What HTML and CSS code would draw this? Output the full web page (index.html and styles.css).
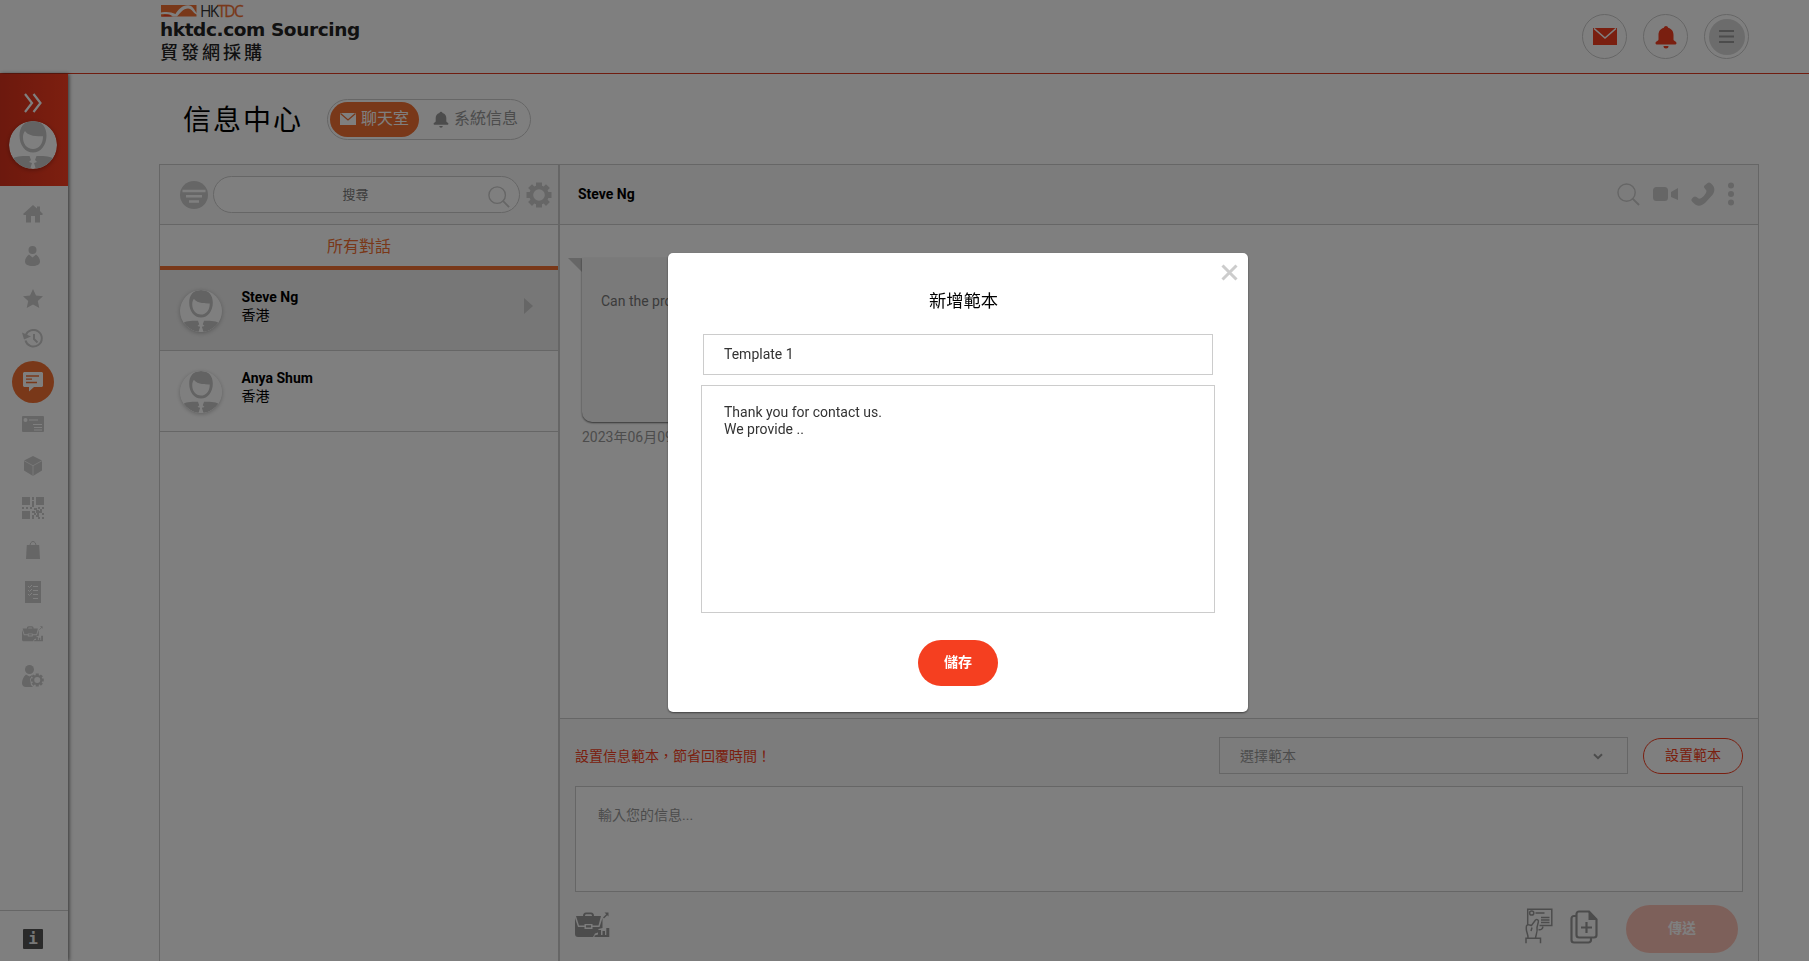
FILE: index.html
```html
<!DOCTYPE html>
<html lang="zh-Hant">
<head>
<meta charset="utf-8">
<title>信息中心</title>
<link rel="stylesheet" href="styles.css">
</head>
<body>
<svg class="defs" width="0" height="0">
  <defs>
    <clipPath id="avatar-clip"><circle cx="24" cy="24" r="24"/></clipPath>
    <symbol id="avatar" viewBox="0 0 48 48">
      <g clip-path="url(#avatar-clip)">
        <rect width="48" height="48" fill="#fff"/>
        <path fill="#c6c6c6" fill-rule="evenodd" d="M24 0C15 0 10.500 6 10.500 14.500c0 9.500 5.500 17 13.500 17s13.500-7.500 13.500-17C37.500 6 33 0 24 0zM16 10c2.500 4 8 5.500 18 5.300C34 23 30 28 24 28S13.800 23 14 16c0-2.500.8-4.500 2-6z"/>
        <path fill="#c6c6c6" d="M3 38c3-2.500 8-3 17.500-3l1.500 4-2 2 3 1-2.500 8H8zM45 38c-3-2.500-8-3-17.500-3L26 39l2 2-3 1 2.500 8H40z"/>
      </g>
    </symbol>
    <symbol id="search" viewBox="0 0 24 24">
      <circle cx="10" cy="10" r="9" fill="none" stroke="#ccc" stroke-width="1.500"/>
      <path d="M16 16l7 7" stroke="#ccc" stroke-width="2"/>
    </symbol>
    <symbol id="bell" viewBox="0 0 22 24">
      <path d="M11 1a2.300 2.300 0 0 1 2.200 1.800C17 3.800 18.500 7 18.500 10v4.500c0 1.500 3 1.700 3 3.500 0 1-.8 1.500-1.800 1.500H2.300C1.300 19.500.5 19 .5 18c0-1.800 3-2 3-3.500V10c0-3 1.500-6.200 5.300-7.200A2.300 2.300 0 0 1 11 1zM8.500 21h5a2.500 2.500 0 0 1-5 0z"/>
    </symbol>
    <symbol id="brief" viewBox="0 0 36 26">
      <path fill-rule="evenodd" d="M8 4c0-2 1-3.500 3-3.500h5c2 0 3 1.500 3 3.500h7L23.500 13.500H17.500V12h-8v1.500H4L1 4zM10 4h7c0-1.200-.5-1.800-1.500-1.800h-4C10.500 2.200 10 2.800 10 4z"/>
      <path d="M0 6L3 15h6.500v2h8v-2h7L27.500 6v10l-4 1-.5 3.500-3 1L18 25H3c-2 0-3-1-3-3z"/>
      <path d="M11 13.300h5v2.200h-5zM19.500 25v-1.500l3.500-1V18h3v5h1.500v-4H30v4h1.300v-7h3v9z"/>
      <path d="M28.500 6L32.500 2" fill="none" stroke="currentColor" stroke-width="1.400"/>
      <path d="M29.500.5h4v4z"/>
    </symbol>
    <symbol id="gear" viewBox="0 0 26 26">
      <path fill-rule="evenodd" d="M10 .5h6v3.300l1.700.7L20 2.200 23.900 6l-2.300 2.300.7 1.700h3.200v6h-3.200l-.7 1.700 2.300 2.300-3.900 3.900-2.300-2.300-1.700.7v3.200h-6v-3.200l-1.700-.7L6 23.900 2.100 20l2.300-2.300-.7-1.700H.5v-6h3.200l.7-1.700L2.100 6 6 2.200l2.300 2.300 1.700-.7zM13 7.200a5.800 5.800 0 1 0 0 11.600 5.800 5.800 0 0 0 0-11.600z"/>
    </symbol>
  </defs>
</svg>

<div class="app">
  <header class="topbar">
    <div class="brand">
      <div class="brand-mark">
        <svg width="40" height="14" viewBox="0 0 40 14">
          <path fill="#f37032" d="M3 1h35.500v11.500H3z"/>
          <path fill="#fff" d="M0 9.500C7 7 13 8 17.500 10c3-5 8-9.800 14-8.500 4.500 1 5.500 7 8.500 8.500l-1.500.5C35 9 34 4.500 30 4.500c-5 0-7 4-11 8h-4C12 9.500 7 9.500 0 10.500z"/>
          <path fill="#f43e20" d="M3 12.500c4-2.500 8-2.500 11 0z"/>
        </svg>
        <span class="hk">HK</span><span class="tdc">TDC</span>
      </div>
      <div class="brand-en">hktdc.com Sourcing</div>
      <div class="brand-zh">貿發網採購</div>
    </div>
    <div class="top-actions">
      <span class="round"><svg width="24" height="17" viewBox="0 0 24 17"><path fill="#f43e20" d="M0 0h24v17H0z"/><path d="M1 .5l11 9.500L23 .5" fill="none" stroke="#fff" stroke-width="1.600"/></svg></span>
      <span class="round"><svg class="red" width="22" height="24"><use href="#bell"/></svg></span>
      <span class="round"><span class="menu-dot"><svg width="15" height="13" viewBox="0 0 15 13"><path d="M0 1h15M0 6.500h15M0 12h15" stroke="#999" stroke-width="2"/></svg></span></span>
    </div>
  </header>

  <div class="body">
    <nav class="rail">
      <div class="rail-head">
        <svg width="18" height="20" viewBox="0 0 18 20"><path d="M1 1l7 9-7 9M9.500 1l7 9-7 9" fill="none" stroke="#fff" stroke-width="2.200"/></svg>
        <svg class="rail-avatar" width="48" height="48"><use href="#avatar"/></svg>
      </div>
      <div class="rail-list">
        <span class="rail-item"><svg width="20" height="18" viewBox="0 0 20 18"><path d="M10 0l4 3.500V1.500h3V6l3 3-1 1h-2v7.500h-5V11H8v6.500H3V10H1L0 9z"/></svg></span>
        <span class="rail-item"><svg width="15" height="20" viewBox="0 0 15 20"><circle cx="7.500" cy="4" r="4"/><path d="M4 8.500l3.500 3 3.500-3c2.500 1.500 4 4.500 4 7C15 18.500 12 20 7.500 20S0 18.500 0 15.500c0-2.500 1.500-5.500 4-7z"/></svg></span>
        <span class="rail-item"><svg width="20" height="19" viewBox="0 0 20 19"><path d="M10 0l3 6.500 7 .8-5.200 4.700 1.500 7L10 15.500 3.700 19l1.500-7L0 7.300l7-.8z"/></svg></span>
        <span class="rail-item history"><svg width="21" height="19" viewBox="0 0 21 19"><path d="M3.500 11.500a8.300 8.300 0 1 0 0-4.500M12 5v5l3.500 3.500" fill="none" stroke="#ccc" stroke-width="2"/><path d="M0 3.500l2 7 7-3z"/></svg></span>
        <span class="rail-item"><span class="rail-active"><svg width="20" height="20" viewBox="0 0 20 20"><path fill="#fff" d="M1 0h18l1 1v13l-1 1h-8l-5 4.500V15H1l-1-1V1z"/><path d="M3 4h13M3 7.200h6M3 10.500h11" stroke="#f37032" stroke-width="1.300"/></svg></span></span>
        <span class="rail-item"><svg width="22" height="16" viewBox="0 0 22 16"><rect width="22" height="16" rx="1"/><circle cx="3.500" cy="4" r="2" fill="#fff"/><path d="M7 4h9M11 8.500h9M12 11.500h8M12 14h8" stroke="#fff" stroke-width="1.100"/></svg></span>
        <span class="rail-item"><svg width="18" height="20" viewBox="0 0 18 20"><path d="M9 0l9 4.500v10L9 20l-9-5.500v-10z"/><path d="M0 4.700l9 5 9-5M9 9.700V20" fill="none" stroke="#fff" stroke-width=".7"/></svg></span>
        <span class="rail-item"><svg width="22" height="22" viewBox="0 0 22 22"><path d="M0 0h8v8H0zM14 0h8v8h-8zM0 14h8v8H0zM10 0h2v3h-2zM10 4h2v6h-2zM0 10h2v2H0zM4 10h2v2H4zM8 10h2v2H8zM12 11h3v2h-3zM16 10h2v2h-2zM20 10h2v2h-2zM18 12h2v2h-2zM14 13h3v3h-3zM10 14h3v2h-3zM12 16h2v2h-2zM10 18h2v4h-2zM15 16h2v2h-2zM17 14h3v2h-3zM20 16h2v2h-2zM14 18h3v2h-3zM16 20h2v2h-2zM20 20h2v2h-2z"/></svg></span>
        <span class="rail-item"><svg width="14" height="18" viewBox="0 0 14 18"><path d="M.8 4h12.400L14 18H0z"/><path d="M4 5c0-6 6-6 6 0" fill="none" stroke="#ccc"/></svg></span>
        <span class="rail-item"><svg width="16" height="22" viewBox="0 0 16 22"><path d="M0 0h16v22H0z"/><path d="M8 5.500h5M8 9.500h5M8 13.500h5M8 17.500h5M3 5l1.500 1.500L7 4M3 9l1.500 1.500L7 8M3 13l1.500 1.500L7 12" fill="none" stroke="#fff" stroke-width="1"/></svg></span>
        <span class="rail-item"><svg width="22" height="16"><use href="#brief"/></svg></span>
        <span class="rail-item"><svg width="22" height="22" viewBox="0 0 22 22"><circle cx="7.500" cy="4.500" r="4.500"/><path d="M4 9.500l3.500 2 3.500-2-3 4.500 1 6 2 2H4c-2.500 0-4-1.500-4-4 0-3 1.500-6.500 4-8.500z"/><svg x="8.500" y="8" width="13.500" height="14"><use href="#gear"/></svg></svg></span>
      </div>
      <div class="rail-foot"><span class="info">i</span></div>
    </nav>

    <main class="main">
      <div class="title-row">
        <h1>信息中心</h1>
        <div class="switch">
          <span class="switch-on"><svg width="16" height="12" viewBox="0 0 16 12"><path fill="#fff" d="M0 0h16v12H0z"/><path d="M.5.500L8 7 15.500.5" fill="none" stroke="#f37032" stroke-width="1.300"/></svg>聊天室</span>
          <span class="switch-off"><svg width="16" height="17"><use href="#bell"/></svg>系統信息</span>
        </div>
      </div>
      <div class="panel">
        <section class="threads">
          <div class="thread-tools">
            <svg class="filter" width="28" height="28" viewBox="0 0 28 28"><circle cx="14" cy="14" r="14" fill="#ccc"/><path d="M2.500 10h23M6 15.300h16M9 20.500h10" stroke="#fff" stroke-width="2.400"/></svg>
            <div class="search"><span>搜尋</span><svg width="22" height="22"><use href="#search"/></svg></div>
            <svg class="grey" width="26" height="26"><use href="#gear"/></svg>
          </div>
          <div class="tab">所有對話</div>
          <div class="thread selected">
            <svg class="face" width="42" height="42"><use href="#avatar"/></svg>
            <div class="who"><b>Steve Ng</b><span>香港</span></div>
            <i class="caret"></i>
          </div>
          <div class="thread">
            <svg class="face" width="42" height="42"><use href="#avatar"/></svg>
            <div class="who"><b>Anya Shum</b><span>香港</span></div>
          </div>
        </section>
        <section class="chat">
          <div class="chat-head">
            <b>Steve Ng</b>
            <div class="chat-icons">
              <svg width="23" height="23"><use href="#search"/></svg>
              <svg width="25" height="14" viewBox="0 0 25 14"><rect width="15" height="14" rx="3.500"/><path d="M18 5l7-4v12l-7-3z"/></svg>
              <svg width="24" height="24" viewBox="0 0 24 24"><path d="M16 1.500c1.500-1.500 2.500-1.500 4 0 5 4 4 9 0 13l-5.500 6c-4 4-9 4.500-13-.5-1.500-1.500-1.500-2.500 0-4l1-1c1-.8 2-.8 3 0l2.500 1.800c3 0 7.500-5 7.500-8L13.500 6c-.8-1-.5-2 0-2.500z"/></svg>
              <svg width="6" height="24" viewBox="0 0 6 24"><circle cx="3" cy="3.500" r="3"/><circle cx="3" cy="12" r="3"/><circle cx="3" cy="20.500" r="3"/></svg>
            </div>
          </div>
          <div class="log">
            <svg class="beak" width="14" height="14" viewBox="0 0 14 14"><path fill="#ccc" d="M0 0h14v14z"/></svg>
            <div class="log-col">
              <div class="bubble">Can the product be customised?</div>
              <div class="date">2023年06月09日</div>
            </div>
          </div>
          <div class="compose">
            <div class="compose-top">
              <span class="hint">設置信息範本，節省回覆時間！</span>
              <div class="select"><span>選擇範本</span><svg width="10" height="7" viewBox="0 0 10 7"><path d="M1 1.200l4 4 4-4" fill="none" stroke="#999" stroke-width="2"/></svg></div>
              <span class="set-btn">設置範本</span>
            </div>
            <div class="message">輸入您的信息...</div>
            <div class="compose-foot">
              <svg class="brief" width="36" height="26"><use href="#brief"/></svg>
              <svg class="hand" width="28" height="36" viewBox="0 0 28 36" fill="none" stroke="#999" stroke-width="1.500">
                <path d="M2.700 17V1.200h24.100V17.500H14.500"/>
                <circle cx="6.700" cy="5" r="2.100"/>
                <path d="M10.500 5h9M16 9.500h8.500M16 12h8.500M16 14.500h8.500"/>
                <path d="M3 30.500c.5-3.500-1.700-6-1.700-9.500 0-2-.3-4.500 2.200-4.300 1.500 0 2.200.6 3 .8L10.500 12c1.500-1.200 3.500 0 2.800 2l-1.300 5.500c1 4-1.500 8-1.500 11M13.500 21.500c2.500.8 4-.5 4.500-3M6 23l1-3.500M1 35.300v-5h14.500v5"/>
              </svg>
              <svg class="doc" width="28" height="34" viewBox="0 0 28 34" fill="none" stroke="#999" stroke-width="2.200"><path d="M10 1.500h9l7.500 8V25a2.500 2.500 0 0 1-2.500 2.500H9A2.500 2.500 0 0 1 6.500 25V4A2.500 2.500 0 0 1 9 1.500z"/><path d="M6 6H4a2.500 2.500 0 0 0-2.500 2.500V30A2.500 2.500 0 0 0 4 32.500h14.500A2.500 2.500 0 0 0 21 30v-2M11 17.500h11M16.500 12v11"/><path fill="#999" stroke="none" d="M18.500 1l8.500 9h-8.500z"/></svg>
              <span class="send">傳送</span>
            </div>
          </div>
        </section>
      </div>
    </main>
  </div>
</div>

<div class="overlay">
  <div class="modal">
    <svg class="close" width="17" height="17" viewBox="0 0 17 17"><path d="M1.500 1.500l14 14M15.500 1.500l-14 14" stroke="#ccc" stroke-width="3"/></svg>
    <h2>新增範本</h2>
    <div class="field">Template 1</div>
    <div class="area">Thank you for contact us.<br>We provide ..</div>
    <div class="save">儲存</div>
  </div>
</div>
</body>
</html>
```
FILE: styles.css
```css
* { box-sizing: border-box; }
body {
  margin: 0;
  height: 961px;
  overflow: hidden;
  background: #fff;
  color: #000;
  font: 14px/18px Roboto, "Noto Sans CJK TC", sans-serif;
}
svg { display: block; flex: none; }
.defs { position: absolute; }
.app { height: 961px; display: flex; flex-direction: column; }

.topbar {
  height: 74px;
  flex: none;
  display: flex;
  justify-content: space-between;
  border-bottom: 1px solid #e03a20;
  padding: 4px 60px 0 158px;
}
.brand-mark { display: flex; align-items: center; height: 14px; font: 15.500px/14px "Open Sans", sans-serif; letter-spacing: -1.700px; }
.hk { color: #333; margin-left: 2px; }
.tdc { color: #f37032; -webkit-text-stroke: 0.300px #f37032; }
.brand-en { margin: 1px 0 0 2px; font: bold 18.500px/22px "DejaVu Sans", sans-serif; color: #222; white-space: nowrap; letter-spacing: -0.400px; }
.brand-zh { margin: -1px 0 0 2px; font: 500 18px/22px "Noto Sans CJK TC", sans-serif; color: #222; letter-spacing: 3px; }
.top-actions { display: flex; gap: 16px; padding-top: 10px; }
.round { width: 45px; height: 45px; border: 1px solid #ccc; border-radius: 50%; display: flex; align-items: center; justify-content: center; }
.red { fill: #f43e20; }
.menu-dot { width: 36px; height: 36px; border-radius: 50%; background: #d9d9d9; display: flex; align-items: center; justify-content: center; }

.body { flex: 1; display: flex; min-height: 0; }
.rail { width: 68px; flex: none; display: flex; flex-direction: column; box-shadow: 1px 0 4px rgba(0, 0, 0, .6); }
.rail-head { height: 112px; background: linear-gradient(90deg, #d9321c, #fa3e20); display: flex; flex-direction: column; align-items: center; padding: 19px 3px 0 0; gap: 8px; }
.rail-avatar { border-radius: 50%; box-shadow: 0 1px 4px rgba(0, 0, 0, .3); }
.rail-list { flex: 1; padding: 7px 3px 0 0; fill: #ccc; color: #ccc; }
.rail-item { height: 42px; display: flex; align-items: center; justify-content: center; }
.history { padding-bottom: 4px; }
.rail-active { width: 42px; height: 42px; flex: none; border-radius: 50%; background: #f37032; display: flex; align-items: center; justify-content: center; }
.rail-foot { height: 51px; border-top: 1px solid #ccc; padding: 18px 0 0 23px; }
.info { display: block; width: 20px; height: 20px; border-radius: 1px; background: #555; color: #eee; text-align: center; font: bold 16px/20px "DejaVu Sans Mono", monospace; }

.main { flex: 1; display: flex; flex-direction: column; padding: 0 50px 0 91px; min-width: 0; }
.title-row { height: 90px; flex: none; display: flex; align-items: center; padding-left: 24px; }
h1 { margin: 4px 26px 0 0; font-size: 28px; font-weight: 400; line-height: 40px; letter-spacing: 2px; width: 118px; white-space: nowrap; }
.switch { width: 204px; height: 41px; border: 1px solid #ccc; border-radius: 21px; display: flex; align-items: center; padding-left: 2px; font-size: 16px; }
.switch span { display: flex; align-items: center; }
.switch-on { width: 89px; height: 35px; border-radius: 18px; background: #f37032; color: #fff; padding-left: 10px; gap: 5px; }
.switch-off { color: #999; fill: #999; padding-left: 14px; gap: 5px; }

.panel { flex: 1; display: flex; border: 1px solid #ccc; border-bottom: 0; min-height: 0; }
.threads { width: 400px; flex: none; border-right: 2px solid #ccc; }
.thread-tools { height: 60px; background: #f9f9f9; border-bottom: 1px solid #ccc; display: flex; align-items: center; padding-left: 20px; }
.grey { fill: #ccc; }
.search { width: 307px; height: 37px; margin: 0 6px 0 5px; border: 1px solid #ccc; border-radius: 19px; background: #fff; display: flex; align-items: center; padding-right: 9px; color: #777; font-size: 13px; }
.search span { flex: 1; text-align: center; padding-left: 9px; }
.search svg { margin-top: 4px; }
.tab { height: 45px; border-bottom: 4px solid #f37032; color: #f37032; text-align: center; font-size: 16px; line-height: 43px; }
.thread { height: 81px; border-bottom: 1px solid #ccc; display: flex; padding: 20px 25px 0 20px; }
.selected { background: #eee; }
.face { border-radius: 50%; box-shadow: 0 1px 4px rgba(0, 0, 0, .25); }
.who { flex: 1; margin: -2px 0 0 19.500px; display: flex; flex-direction: column; font-weight: 400; }
.who b { line-height: 19px; }
.who span { line-height: 17px; }
.caret { margin-top: 8px; width: 0; height: 0; border: solid transparent; border-width: 8px 0 8px 9px; border-left-color: #ccc; }

.chat { flex: 1; display: flex; flex-direction: column; min-width: 0; }
.chat-head { height: 60px; flex: none; background: #f9f9f9; border-bottom: 1px solid #ccc; display: flex; align-items: center; justify-content: space-between; padding: 0 24px 2px 18px; }
.chat-icons { display: flex; align-items: center; gap: 13px; fill: #ccc; padding-top: 1px; }
.log { flex: 1; display: flex; padding: 33px 0 0 8px; }
.bubble { width: 500px; height: 164px; background: #f4f4f4; border-radius: 0 0 10px 10px; box-shadow: 0 1px 2px rgba(0, 0, 0, .6); padding: 34px 19px; color: #777; }
.date { color: #999; padding-top: 6px; }

.compose { height: 243px; flex: none; background: #f9f9f9; border-top: 1px solid #ccc; padding: 18px 15px 0; }
.compose-top { display: flex; align-items: center; height: 37px; }
.hint { flex: 1; color: #f43e20; padding-top: 1px; }
.select { width: 409px; height: 37px; border: 1px solid #ccc; padding: 1px 24px 0 20px; display: flex; align-items: center; justify-content: space-between; color: #999; }
.set-btn { width: 100px; height: 36px; margin: 1px 0 0 15px; border: 1px solid #f43e20; border-radius: 18px; color: #f43e20; background: #fff; text-align: center; line-height: 33px; }
.message { margin-top: 12px; height: 106px; border: 1px solid #ccc; background: #fff; padding: 19px 22px; color: #999; }
.compose-foot { display: flex; align-items: flex-start; padding: 13px 5px 0 0; fill: #999; color: #999; }
.brief { margin-top: 7px; }
.hand { margin: 3px 17px 0 auto; fill: none; }
.doc { margin: 5px 28px 0 0; }
.send { width: 112px; height: 48px; border-radius: 24px; background: #fbc0b4; color: #fff; text-align: center; font-weight: 700; line-height: 46px; }

.overlay { position: fixed; inset: 0; background: rgba(0, 0, 0, .5); }
.modal { position: absolute; left: 668px; top: 253px; width: 580px; height: 459px; background: #fff; border-radius: 5px; box-shadow: 0 1px 2px rgba(0, 0, 0, .5); padding: 34px 33px 0; }
.close { position: absolute; right: 10px; top: 11px; }
h2 { margin: 0; padding-left: 11px; text-align: center; font-size: 17.300px; font-weight: 400; line-height: 29px; }
.field { margin: 18px 2px 0; height: 41px; border: 1px solid #ccc; padding: 10px 20px; color: #333; }
.area { margin-top: 10px; height: 228px; border: 1px solid #ccc; padding: 18px 22px; line-height: 17px; color: #333; }
.save { width: 80px; height: 46px; margin: 27px auto 0; border-radius: 23px; background: #f53f20; color: #fff; font-weight: 700; text-align: center; line-height: 44px; }
```
